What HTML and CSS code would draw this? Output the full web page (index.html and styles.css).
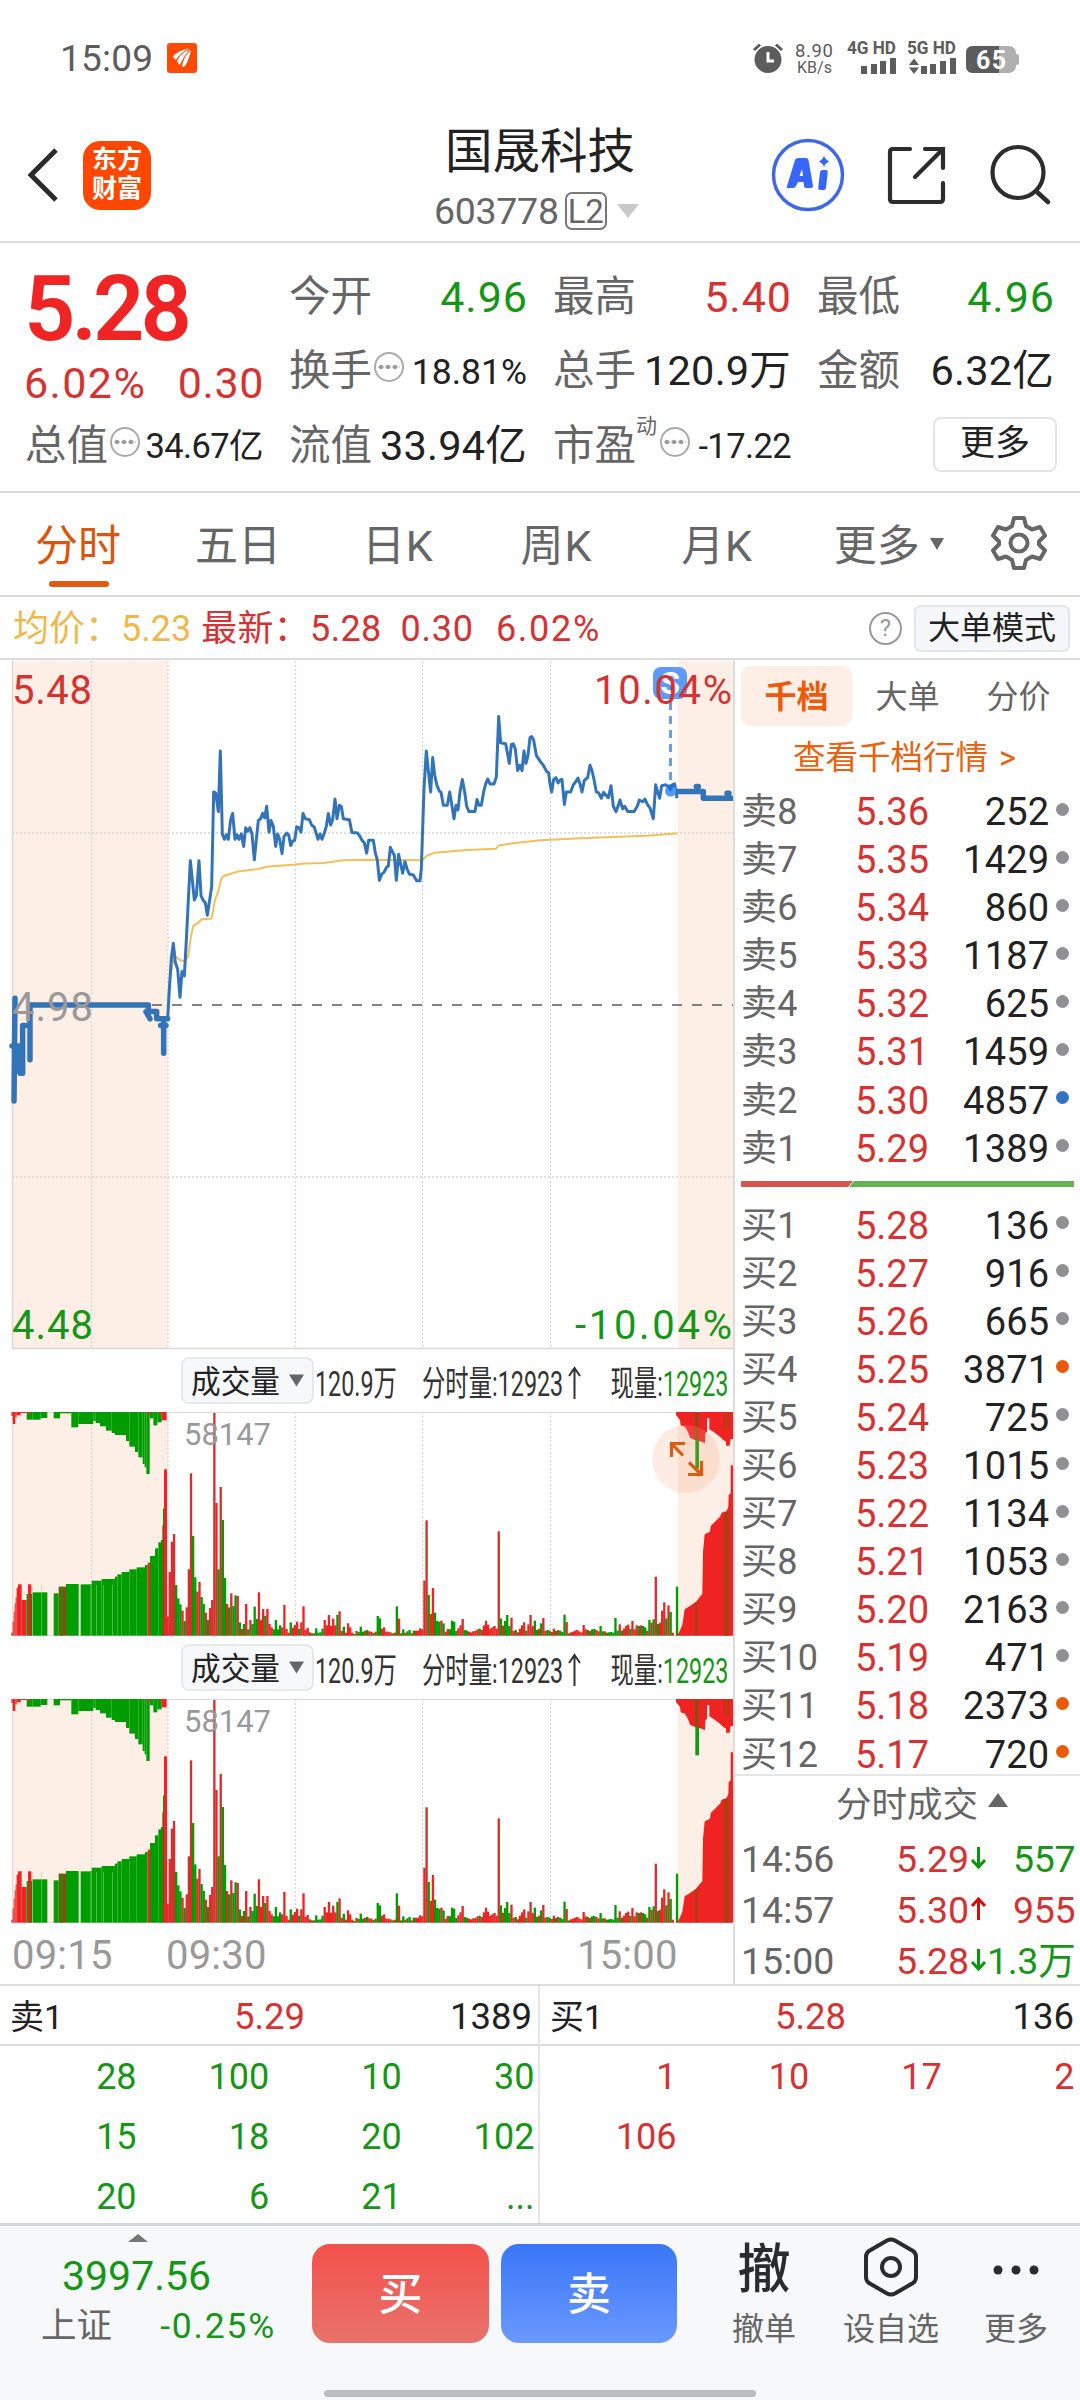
FILE: index.html
```
<!DOCTYPE html>
<html lang="zh-CN">
<head>
<meta charset="utf-8">
<title>国晟科技 603778</title>
<link rel="stylesheet" href="styles.css">
</head>
<body>
<header class="status">
  <span class="clock">15:09</span>
  <svg class="status-app" viewBox="0 0 30 30"><rect width="30" height="30" rx="3" fill="#fe4a05"/><path d="M6 14Q8 9 22 5Q12 11 9 17ZM10 19Q12 11 23 6Q16 14 13 22ZM15 24Q16 14 24 7Q22 17 18 23Z" fill="#fff"/></svg>
  <svg class="status-icons" viewBox="0 0 272 44">
    <g fill="#5c5c5c">
      <circle cx="19" cy="23.500" r="13.500"/>
      <path d="M5 14l6-5.500M27 8.500l6 5.500" stroke="#5c5c5c" stroke-width="3"/>
      <path d="M19 16v9h6" fill="none" stroke="#fff" stroke-width="3"/>
      <text x="46" y="21" font-size="18.500" textLength="38">8.90</text>
      <text x="48" y="37" font-size="16" textLength="35">KB/s</text>
      <text x="98" y="18" font-size="18" font-weight="700" textLength="49" lengthAdjust="spacingAndGlyphs">4G HD</text>
      <text x="158" y="18" font-size="18" font-weight="700" textLength="49" lengthAdjust="spacingAndGlyphs">5G HD</text>
      <path d="M112 30h6v8h-6zM122 28h6v10h-6zM131 25h6v13h-6zM141 22h6v16h-6zM172 30h6v8h-6zM181 28h6v10h-6zM191 25h6v13h-6zM201 22h6v16h-6zM160 29l5-6.500 5 6.500zM160 31.500l5 6.500 5-6.500z"/>
      <rect x="217" y="10" width="50" height="27" rx="7" fill="#b0b0b0"/><rect x="266" y="18" width="4" height="11" rx="2" fill="#b0b0b0"/>
      <path d="M224 10h26v27h-26q-7 0-7-7v-13q0-7 7-7z"/>
      <text x="227" y="32.500" font-size="25" font-weight="700" fill="#fff" textLength="30">65</text>
    </g>
  </svg>
</header>

<nav class="titlebar">
  <svg class="back" viewBox="0 0 32 56"><path d="M29 3L4 28L29 53" fill="none" stroke="#2b2b2b" stroke-width="5"/></svg>
  <div class="logo"><span>东方</span><span>财富</span></div>
  <div class="stock">
    <h1>国晟科技</h1>
    <div class="code"><span>603778</span><b>L2</b><i></i></div>
  </div>
  <svg class="tools" viewBox="0 0 290 80">
    <circle cx="43" cy="40" r="34.500" fill="#fff" stroke="#3f67e8" stroke-width="3.500"/>
    <path d="M30 25Q31 23 33 23H41Q43 23 43.500 25L48 51Q48 53 46 53H41Q39 53 39 51L38.500 47H33L31 51Q30 53 28 53H23Q21 53 22 51ZM37 34L34.500 41H38Z" fill="#3767fa" fill-rule="evenodd"/>
    <path d="M55 37Q55.500 35 57.500 35H61Q63 35 62.700 37L61 53Q60.700 55 58.700 55H55Q53 55 53.200 53Z" fill="#3767fa"/>
    <path d="M59 21q1.500 4 5 5.500q-3.500 1.500-5 5.500q-1.500-4-5-5.500q3.500-1.500 5-5.500z" fill="#3767fa"/>
    <path d="M145 14H128Q125 14 125 17V64Q125 67 128 67H175Q178 67 178 64V48M160 14H178V33M178 14L150 42" fill="none" stroke="#2d2d2d" stroke-width="4.200" stroke-linecap="round"/>
    <circle cx="253" cy="37.500" r="25.500" fill="none" stroke="#2d2d2d" stroke-width="4.200"/><path d="M272 57L283 67" stroke="#2d2d2d" stroke-width="4.500" stroke-linecap="round"/>
  </svg>
</nav>

<section class="quote">
  <div class="col lead">
    <div class="last">5.28</div>
    <div class="chg red"><span>6.02%</span><span>0.30</span></div>
    <div class="cell"><label>总值</label><i class="tip"></i><b class="sm yi">34.67亿</b></div>
  </div>
  <div class="col">
    <div class="cell"><label>今开</label><b class="green px">4.96</b></div>
    <div class="cell"><label>换手</label><i class="tip"></i><b class="sm">18.81%</b></div>
    <div class="cell"><label>流值</label><b>33.94亿</b></div>
  </div>
  <div class="col">
    <div class="cell"><label>最高</label><b class="red px">5.40</b></div>
    <div class="cell"><label>总手</label><b>120.9万</b></div>
    <div class="cell"><label>市盈</label><sup>动</sup><i class="tip"></i><b class="sm yi">-17.22</b></div>
  </div>
  <div class="col">
    <div class="cell"><label>最低</label><b class="green px">4.96</b></div>
    <div class="cell"><label>金额</label><b>6.32亿</b></div>
    <div class="cell end"><button class="more">更多</button></div>
  </div>
</section>

<nav class="tabs">
  <a class="on">分时</a><a>五日</a><a>日K</a><a>周K</a><a>月K</a><a class="drop">更多<i></i></a>
  <svg viewBox="0 0 56 56"><path d="M23 3h10l2 8 6 3.500 8-2.500 5 8.500-6 6v3l6 6-5 8.500-8-2.500-6 3.500-2 8h-10l-2-8-6-3.500-8 2.500-5-8.500 6-6v-3l-6-6 5-8.500 8 2.500 6-3.500z" fill="none" stroke="#666" stroke-width="4" stroke-linejoin="round"/><circle cx="28" cy="28" r="8.500" fill="none" stroke="#666" stroke-width="4"/></svg>
</nav>

<div class="info">
  <span class="avg">均价：5.23</span><span class="red now">最新：5.28</span><span class="red mid">0.30</span><span class="red pct">6.02%</span>
  <i class="help">?</i><button>大单模式</button>
</div>

<main>
  <section class="charts">
    <svg class="price" viewBox="0 660 735 690">
      <path d="M12 661H168V1348H12ZM678 661H733V1348H678Z" fill="#fdeee6"/>
      <path d="M91.500 661V1348M168 661V1348M295.500 661V1348M422.500 661V1348M550.500 661V1348M12 833H733M12 1177H733" class="dots"/>
      <path d="M12.500 660V1348.500H735" fill="none" stroke="#d8d8d8" stroke-width="1.500"/>
      <path d="M152 1005H733" stroke="#808080" stroke-width="1.800" stroke-dasharray="10 10"/>
      <g transform="translate(0 650) scale(.33333 .44643)">
        <polyline class="avgline" points="503,800 510,740 520,690 530,688 540,695 555,697 565,685 573,640 580,618 593,612 605,603 633,602 638,590 645,560 655,540 665,510 675,505 715,496 770,491 805,485 880,481 915,478 970,477 1030,471 1110,470 1267,471 1280,461 1305,454 1400,448 1488,445 1496,438 1540,433 1620,426 1760,421 1940,416 2005,412 2031,411"/>
        <polyline class="line" points="503,826 508,760 514,690 520,657 526,700 533,715 540,778 546,720 553,730 559,650 565,560 571,472 577,515 583,560 589,550 597,472 603,550 609,560 616,566 622,594 629,560 635,530 641,318 647,320 655,362 661,226 667,412 673,424 679,414 685,424 692,380 698,366 705,424 711,414 717,424 724,412 731,440 737,398 743,406 750,398 756,412 763,470 769,425 775,382 782,378 788,366 794,376 800,350 807,408 813,382 820,395 827,440 833,412 839,424 846,456 852,418 860,410 866,414 872,438 878,428 884,426 890,396 897,398 903,408 909,366 916,378 928,380 935,392 943,397 949,412 954,424 960,412 966,424 973,410 979,395 985,366 992,392 998,380 1005,334 1011,378 1018,348 1024,350 1030,378 1048,380 1056,409 1073,410 1080,418 1086,426 1093,432 1100,455 1106,426 1120,426 1126,455 1132,470 1138,516 1145,502 1152,498 1160,486 1165,484 1171,442 1177,452 1183,460 1189,516 1196,458 1202,480 1208,500 1215,474 1221,490 1228,502 1240,504 1250,517 1260,517 1264,490 1272,310 1279,226 1285,270 1292,318 1298,241 1304,280 1311,304 1318,316 1323,318 1330,348 1342,348 1349,318 1355,345 1362,378 1368,348 1374,358 1380,318 1387,290 1394,318 1400,350 1407,362 1425,362 1431,335 1437,348 1444,348 1451,318 1457,300 1463,289 1470,300 1482,300 1489,285 1496,149 1502,208 1517,210 1521,226 1528,254 1534,212 1540,210 1546,222 1553,270 1559,258 1566,270 1572,226 1578,254 1584,236 1590,196 1595,194 1601,202 1609,236 1621,250 1630,258 1640,272 1646,275 1650,300 1655,318 1661,290 1668,286 1674,298 1682,290 1686,290 1693,346 1699,318 1712,318 1720,302 1728,294 1734,287 1740,300 1746,318 1753,292 1763,286 1770,258 1776,270 1782,290 1789,318 1796,320 1804,332 1811,319 1825,331 1833,304 1840,350 1848,362 1855,348 1860,336 1868,356 1874,350 1883,362 1902,362 1912,350 1918,336 1928,340 1935,334 1942,346 1950,354 1960,378 1967,302 1973,318 1979,332 1985,304 1998,302 2005,306 2024,300 2031,332"/>
        <path class="auction" d="M45 780L42 1010M36 887H55V935L60 948H68V841H90V918V795H445V810H470M438 810L450 826M470 812V826H503M482 841H498M491 826V903M2031 317H2110V332H2202M2089 306H2095M2181 321H2187"/>
      </g>
      <rect x="653" y="667" width="34" height="32" rx="8" fill="#5d9bf6"/>
      <text x="670" y="694" font-size="32" font-weight="700" fill="#fff" text-anchor="middle">S</text>
      <path d="M670.500 702V786" stroke="#69a0e4" stroke-width="3" stroke-dasharray="8 6"/>
      <circle cx="670.500" cy="791" r="5.500" fill="#5498f8"/><path d="M666 785h9l-5 7z" fill="#1f6be8"/>
      <g font-size="40">
        <text x="12" y="704" fill="#d93030" textLength="80">5.48</text>
        <text x="12" y="1021" fill="#999" textLength="81">4.98</text>
        <text x="12" y="1339" fill="#169616" textLength="81">4.48</text>
        <text x="594" y="704" fill="#d93030" textLength="138">10.04%</text>
        <text x="575" y="1339" fill="#169616" textLength="157">-10.04%</text>
      </g>
    </svg>
    <div class="volumes"></div>
    <div class="axis"><span>09:15</span><span>09:30</span><span>15:00</span></div>
  </section>

  <aside class="book">
    <div class="booktabs"><b>千档</b><span>大单</span><span>分价</span></div>
    <div class="all">查看千档行情 <span>&gt;</span></div>
    <div class="asks"></div>
    <svg class="ratio" viewBox="0 0 333 6"><path d="M0 0H112L107 6H0Z" fill="#d9534f"/><path d="M113 0H333V6H108Z" fill="#62b54e"/></svg>
    <div class="bids"></div>
    <div class="deals-head">分时成交<i></i></div>
    <div class="deals"></div>
  </aside>
</main>

<section class="queues">
  <div class="queue">
    <header><span>卖1</span><span class="red">5.29</span><span>1389</span></header>
    <div class="nums green"><span>28</span><span>100</span><span>10</span><span>30</span><span>15</span><span>18</span><span>20</span><span>102</span><span>20</span><span>6</span><span>21</span><span>...</span></div>
  </div>
  <div class="queue">
    <header><span>买1</span><span class="red">5.28</span><span>136</span></header>
    <div class="nums red"><span>1</span><span>10</span><span>17</span><span>2</span><span>106</span></div>
  </div>
</section>

<footer>
  <div class="index green"><i></i><strong>3997.56</strong><div><span>上证</span><em>-0.25%</em></div></div>
  <button class="buy">买</button><button class="sell">卖</button>
  <div class="act a1"><b>撤</b><span>撤单</span></div>
  <div class="act a2"><svg viewBox="0 0 56 60"><path d="M24 3.500Q28 1.500 32 3.500L50 14Q53 16 53 20V40Q53 44 50 46L32 56.500Q28 58.500 24 56.500L6 46Q3 44 3 40V20Q3 16 6 14Z" fill="none" stroke="#2b2b2b" stroke-width="4"/><circle cx="28" cy="30" r="9" fill="none" stroke="#2b2b2b" stroke-width="4"/></svg><span>设自选</span></div>
  <div class="act a3"><svg viewBox="0 0 56 60"><g fill="#2b2b2b"><circle cx="10" cy="33" r="4.500"/><circle cx="28" cy="33" r="4.500"/><circle cx="46" cy="33" r="4.500"/></g></svg><span>更多</span></div>
  <div class="home"></div>
</footer>
<script src="app.js"></script>
</body>
</html>
```
FILE: styles.css
```
* { box-sizing: border-box; }
body { margin: 0; width: 1080px; height: 2400px; overflow: hidden; background: #fff; color: #222; font-family: Roboto, "Noto Sans CJK SC", sans-serif; display: flex; flex-direction: column; }
button { font-family: inherit; padding: 0; }
i, em { font-style: normal; }
svg { display: block; flex: none; }
.red { color: #d63232; }
.green { color: #169616; }

.status { height: 112px; display: flex; align-items: flex-start; padding: 36px 59px 0 60px; color: #5c5c5c; }
.clock { font-size: 37px; line-height: 45px; letter-spacing: .2px; }
.status-app { width: 30px; height: 30px; margin: 7px 0 0 14px; }
.status-icons { width: 272px; height: 44px; margin-left: auto; }

.titlebar { height: 131px; border-bottom: 2px solid #dcdcdc; display: flex; position: relative; padding-left: 27px; }
.back { width: 32px; height: 56px; margin-top: 35px; }
.logo { margin: 29px 0 0 24px; width: 68px; height: 69px; border-radius: 17px; background: #ff4702; color: #fff; font-weight: 700; font-size: 25px; line-height: 29px; display: flex; flex-direction: column; align-items: center; padding-top: 4px; }
.stock { flex: 1; padding: 11px 0 0 283px; white-space: nowrap; }
h1 { margin: 0 0 0 11px; font-size: 47.500px; line-height: 58px; font-weight: 400; color: #222; }
.code { display: flex; align-items: center; font-size: 37.500px; line-height: 44px; height: 58px; color: #666; letter-spacing: -.300px; padding-top: 2px; }
.code b { margin-left: 6px; width: 42px; height: 38px; border: 2px solid #777; border-radius: 7px; font-weight: 400; font-size: 33px; line-height: 35px; text-align: center; }
.code i { margin-left: 10px; border: 11px solid transparent; border-top: 14px solid #c9c9c9; border-bottom: 0; }
.tools { width: 290px; height: 80px; margin: 23px 25px 0 0; }

.quote { height: 250px; border-bottom: 2px solid #dcdcdc; padding: 16px 26px 0 25px; display: grid; grid-template-columns: 238px 238px 238px 237px; column-gap: 26px; }
.col { height: 225px; display: flex; flex-direction: column; }
.cell { height: 74.500px; display: flex; align-items: center; white-space: nowrap; }
.cell label { font-size: 41.500px; line-height: 50px; color: #666; padding-top: 1px; }
.cell b { font-weight: 400; font-size: 41.500px; line-height: 50px; margin-left: auto; padding-top: 1px; letter-spacing: .2px; color: #222; }
.cell b.px { font-size: 43px; letter-spacing: 1px; margin-right: -1px; }
.cell b.green { color: #169616; }
.cell b.red { color: #d63232; }
.cell b.sm { font-size: 35.500px; letter-spacing: 0; padding-top: 2px; }
.cell b.yi { font-size: 34.500px; letter-spacing: -.6px; }
.cell sup { font-size: 21px; line-height: 22px; align-self: flex-start; color: #666; margin: 7px -3px 0 0; }
.tip { width: 30px; height: 30px; border: 2px solid #aaa; border-radius: 50%; margin: -7px 0 0 2px; background: radial-gradient(circle, #999 2px, transparent 2.600px) -.500px 0 / 7px 26px repeat-x content-box; padding: 0 2px; }
sup + .tip { margin-left: 6px; }
.last { font-size: 90px; font-weight: 600; line-height: 100px; color: #f02424; height: 95px; letter-spacing: -4px; padding-top: 1px; margin-left: -1px; }
.chg { height: 54px; font-size: 43px; line-height: 58px; display: flex; justify-content: space-between; margin: 0 -1px; }
.chg span:first-child { letter-spacing: 1.400px; }
.chg span { letter-spacing: .6px; }
.end { justify-content: flex-end; }
.more { width: 124px; height: 55px; margin: 0 -3px 2px 0; border: 2px solid #e2e4e6; border-radius: 8px; background: #fff; font-size: 35px; line-height: 48px; color: #222; }

.tabs { height: 104px; border-bottom: 2px solid #dcdcdc; display: flex; align-items: center; padding: 3px 33px 0 35px; font-size: 43px; line-height: 52px; color: #666; }
.tabs a { margin-right: 75px; white-space: nowrap; }
.tabs .on { color: #d9560b; position: relative; margin-right: 74px; }
.on::after { content: ""; position: absolute; left: 14px; top: 61px; width: 60px; height: 6px; border-radius: 3px; background: #e05a10; }
.tabs a:nth-child(2) { margin-right: 81px; }
.tabs a:nth-child(3) { margin-right: 87px; }
.tabs a:nth-child(4) { margin-right: 89px; }
.tabs a:nth-child(5) { margin-right: 81px; }
.tabs a:nth-child(n+3):nth-child(-n+5) { letter-spacing: .8px; }
.tabs .drop { display: flex; align-items: center; margin: 0; }
.drop i { margin: -4px 0 0 10px; border: 7px solid transparent; border-top: 12px solid #666; border-bottom: 0; }
.tabs svg { width: 56px; height: 56px; margin: -5px 0 0 auto; }

.info { height: 63px; border-bottom: 2px solid #dcdcdc; display: flex; align-items: center; padding: 1px 10px 0 13px; font-size: 36px; line-height: 44px; white-space: nowrap; }
.info > span { padding-top: 1px; }
.avg { color: #efb84a; }
.now { margin: 0 19px 0 10px; letter-spacing: .3px; }
.mid { letter-spacing: .8px; }
.pct { margin-left: 22px; letter-spacing: 1.700px; }
.help { margin-left: auto; width: 33px; height: 33px; border: 2.500px solid #999; border-radius: 50%; font-size: 24px; line-height: 29px; text-align: center; color: #999; }
.info button { width: 156px; height: 47px; margin-left: 12px; border: 2px solid #e2e5ea; border-radius: 7px; background: #f6f7fa; font-size: 32px; line-height: 40px; color: #222; }

main { height: 1324px; display: flex; }
.charts { width: 735px; border-right: 2px solid #dcdcdc; flex: none; overflow: hidden; }
.price { width: 735px; height: 690px; }
.dots { stroke: #d6d6d6; stroke-width: 1.300; stroke-dasharray: 2 2; fill: none; }
.line, .avgline, .auction { fill: none; vector-effect: non-scaling-stroke; stroke-linejoin: round; }
.line { stroke: #3374b8; stroke-width: 3; }
.avgline { stroke: #f1c05c; stroke-width: 2; }
.auction { stroke: #3374b8; stroke-width: 5.500; stroke-linecap: round; }
.vhead { width: 735px; height: 62px; font-size: 35px; }
.vol { width: 735px; height: 225px; }
.vgroup { position: relative; }
.expand { position: absolute; left: 652px; top: 75px; width: 68px; height: 68px; }
.axis { display: flex; padding: 9px 0 0 12px; font-size: 40px; line-height: 46px; color: #999; }
.axis span { width: 154px; letter-spacing: .2px; }
.axis span:nth-child(2) { width: 411px; }
.axis span:last-child { width: auto; }

.book { flex: 1; padding: 6px 6px 0 6px; color: #666; }
.booktabs { display: flex; height: 60px; font-size: 32px; line-height: 63px; }
.booktabs b, .booktabs span { width: 111px; text-align: center; flex: none; }
.booktabs b { color: #ee5a0a; font-weight: 700; background: #fdeee6; border-radius: 9px; }
.all { height: 61px; font-size: 32.500px; line-height: 65px; color: #e8620f; padding-left: 52px; white-space: nowrap; }
.all span { margin-left: 3px; }
.lv { height: 48.080px; display: flex; align-items: center; font-size: 36px; line-height: 46px; }
.lv span { width: 100px; white-space: nowrap; padding-top: 2px; letter-spacing: .3px; }
.lv em { width: 88px; text-align: right; color: #d63232; font-size: 38px; padding-top: 2px; }
.lv b { flex: 1; text-align: right; font-weight: 400; color: #222; font-size: 38px; padding-top: 2px; letter-spacing: .2px; }
.lv i { width: 13px; height: 13px; border-radius: 50%; background: #909094; margin: -4px 7px 0 7px; }
.lv i.big { background: #e85a08; }
.lv i.blue { background: #3274c0; }
.ratio { width: 333px; height: 6px; margin: 9px 0 14px; }
.deals-head { height: 59px; margin: -4px -6px 0; border-top: 2px solid #e6e6e6; display: flex; padding-left: 101px; font-size: 35.500px; line-height: 58px; }
.deals-head i { margin: 17px 0 0 10px; height: 0; border: 10px solid transparent; border-bottom: 14px solid #666; border-top: 0; }
.deal { height: 51px; line-height: 52px; font-size: 37.500px; display: flex; white-space: nowrap; }
.deal span { width: 155px; letter-spacing: 0; }
.deal em { color: #d63232; width: 74px; }
.deal svg { width: 17px; height: 27px; margin-top: 11px; }
.deal b { flex: 1; text-align: right; font-weight: 400; letter-spacing: -.3px; margin-right: 1px; }

.queues { height: 239px; border-top: 2px solid #dcdcdc; display: flex; }
.queue { width: 540px; border-right: 2px solid #e6e6e6; }
.queue:last-child { border: 0; }
.queue header { height: 60px; border-bottom: 2px solid #dcdcdc; padding: 0 6px 0 10px; display: grid; grid-template-columns: 177px 1fr 180px; font-size: 36.500px; line-height: 62px; }
.queue header span:nth-child(2) { text-align: center; }
.queue header span:last-child { text-align: right; }
.queue header span:first-child { font-size: 34px; }
.nums { display: grid; grid-template-columns: repeat(4, 132.600px); grid-auto-rows: 60px; font-size: 36px; line-height: 63px; text-align: right; padding-left: 4px; }

footer { flex: 1; background: #f6f8fa; border-top: 3px solid #cfd6da; position: relative; display: flex; }
.index { width: 312px; padding: 8px 38px 0 41px; }
.index i { display: block; width: 0; margin: 0 0 0 87px; border: 10px solid transparent; border-bottom: 8px solid #777; border-top: 0; }
.index strong { display: block; font-weight: 400; font-size: 41px; line-height: 50px; margin: 9px 0 0 21px; }
.index div { display: flex; justify-content: space-between; font-size: 35.500px; line-height: 50px; letter-spacing: 1.800px; margin-right: -2px; }
.index div span { color: #666; letter-spacing: 0; }
.buy, .sell { width: 177px; height: 99px; margin: 18px 12px 0 0; border: 0; border-radius: 18px; color: #fff; font-size: 44px; font-weight: 500; line-height: 96px; padding-top: 3px; }
.buy { background: linear-gradient(#f3514a, #e9726c); }
.sell { width: 176px; background: linear-gradient(#3976f8, #6b99fe); }
.act { display: flex; flex-direction: column; align-items: center; font-size: 32px; line-height: 44px; color: #666; position: relative; white-space: nowrap; }
.act b { font-size: 53px; line-height: 62px; font-weight: 500; color: #2b2b2b; height: 70px; padding-top: 13px; }
.act span { margin-top: 11px; }
.act svg { width: 56px; height: 60px; margin: 11px 0 -1px; }
.a1 { margin-left: 43px; width: 64px; }
.a2 { margin-left: 47px; width: 96px; }
.a3 { margin-left: 45px; width: 64px; }
.home { position: absolute; left: 324px; bottom: 3px; width: 432px; height: 7px; border-radius: 4px; background: #bcbcbe; }
```
FILE: app.js
```
// Minute volume: top edge of each bar on a 3x grid (216 = pane top, 887 = baseline); g = falling minute
const minutes = `830r 696r 605r 582r 735g 775g 793g 812r 843g 802r 688r 400r 588g 712g 755r 726r 771g 792g 818r 840g
804r 780r 219r 489r 688g 441r 540g 714g 792r 802g 760r 798g 766g 768r 847g 867r 852g 792r 868g 840r 852g 800g 837g 757r
840r 807r 828g 807r 852r 862r 868g 840g 868g 856g 862r 795r 867r 878r 847g 863r 855r 845r 866g 847r 799r 869r 864r 877r
880g 880r 865g 878g 877g 866g 840r 856r 825r 857r 836r 856r 825g 814r 873r 860g 878r 850r 862r 878r 882g 873r 876g
860g 875g 872r 870g 874r 875r 879g 875r 828g 835g 866r 862r 875r 875r 877r 880g 878r 799g 836r 880g 868g 878r 874g 870g
880r 872g 872r 872r 865r 868r 722r 541r 765g 822r 744r 818g 843g 845g 842r 850g 875r 867r 868g 842g 845g 873g 865r 856r
837r 870g 872g 875r 877r 874r 873r 868r 866g 870r 856r 842r 854r 866r 862r 858r 866r 574r 835g 857r 843g 825g 858g 833r
873r 870g 877r 866r 856r 847r 872g 853r 825r 858r 842g 870g 866r 850g 834r 872r 870g 872g 876r 866r 873g 870r 872g 876g
824g 846r 880g 877r 875r 872r 870r 874r 877r 855r 868r 870g 873r 868g 867g 870r 874r 858g 874g 874r 878g 877g 876g 878g
834g 872g 853r 872g 866r 858r 854r 867g 843r 868r 856r 858g 856r 858g 862g 872r 840g 848r 838g 710r 852g 848r 812r 787r
835g 796r 816g 878r 887r 740g`.split(/\s+/);

// Opening auction: [x0, x1, edge, colour]
const auctionLow = [[34,38,878,'r'],[38,41,845,'r'],[41,44,815,'r'],[44,47,790,'r'],[47,50,772,'r'],[50,54,743,'r'],[54,65,733,'r'],[65,80,780,'r'],[80,84,762,'g'],[84,94,733,'r'],[88,96,762,'b'],[97,142,757,'g'],[161,176,760,'g'],[176,198,740,'b'],[182,188,740,'g'],[198,236,732,'g'],[242,270,733,'g'],[270,275,733,'g'],[275,305,722,'g'],[305,345,717,'g'],[345,352,710,'g'],[352,365,703,'g'],[365,388,696,'g'],[388,410,688,'g'],[410,435,682,'g'],[435,443,675,'g'],[443,450,668,'r'],[450,465,648,'g'],[465,475,625,'g'],[475,483,607,'g'],[483,489,600,'g'],[489,492,505,'g'],[487,492,556,'b'],[492,501,388,'r']];
const auctionTop = [[34,38,228,'r'],[38,46,252,'r'],[46,50,232,'r'],[50,62,226,'r'],[62,80,219,'r'],[80,97,239,'g'],[84,90,222,'r'],[97,122,239,'g'],[122,142,234,'g'],[161,180,235,'g'],[180,214,220,'g'],[214,235,262,'g'],[235,280,252,'g'],[280,287,243,'g'],[287,300,249,'g'],[300,318,259,'g'],[318,335,272,'g'],[335,345,279,'g'],[345,378,285,'g'],[378,388,303,'g'],[388,405,320,'g'],[405,415,336,'g'],[415,428,352,'g'],[428,434,372,'g'],[434,439,382,'g'],[439,449,402,'g'],[443,450,224,'r'],[450,460,235,'g'],[460,472,256,'g'],[472,485,247,'g'],[485,500,241,'r'],[478,484,222,'r']];
const ink = { r: '#f02323', g: '#009d00', b: '#8c4c10' };
const rect = (x, y, w, h, c) => `<rect x="${x}" y="${y}" width="${w}" height="${h}" fill="${c}"/>`;

function volumeBars() {
  let s = '';
  auctionLow.forEach(([a, b, y, c]) => { s += rect(a, y, b - a, 887 - y, ink[c]); });
  auctionTop.forEach(([a, b, y, c]) => { s += rect(a, 216, b - a, y - 216, ink[c]); });
  [97, 123, 240, 272, 289, 309, 337].forEach(x => { s += rect(x, 735, 1.5, 152, '#9bd79b'); });
  minutes.forEach((m, i) => {
    const y = parseInt(m, 10), tall = y < 720;
    const c = m.endsWith('g') ? ink.g : (tall || i % 3 === 0 ? '#d82e2c' : ink.r);
    s += rect(499.5 + i * 6.367, y, 7, 887 - y, c);
  });
  s += `<g transform="translate(1080 0)">
    <path fill="${ink.r}" d="M951 887L958 875L967 855L974 808L990 798L1008 785L1020 770L1027 762L1029 635L1034 583L1050 575L1052 558L1065 545L1080 530L1085 518L1100 513L1105 500L1106 465L1112 460V376H1121V887ZM948 216V225L960 240L962 256L975 260L985 278L990 293L1005 300L1025 305L1035 310L1036 280L1041 275V235H1048V268L1060 275L1070 283L1080 290L1090 300L1098 305V317H1109L1112 297H1119V216Z"/>
    ${rect(1006, 216, 9, 84, ink.b)}${rect(1006, 300, 11, 85, '#109a10')}${rect(1006, 786, 7, 101, '#a8400f')}${rect(1092, 516, 14, 371, '#a8400f')}${rect(1092, 216, 4, 50, '#a8400f')}${rect(1102, 216, 5, 50, '#a8400f')}
  </g>`;
  return s;
}

function volumePane(expand) {
  return `<div class="vgroup">
  <svg class="vhead" viewBox="0 0 735 62">
    <rect x="182" y="8" width="131" height="45" rx="7" fill="#f7f8fa" stroke="#e0e3e8" stroke-width="1.500"/>
    <text x="191" y="43" font-size="32" fill="#222" textLength="89" lengthAdjust="spacingAndGlyphs">成交量</text>
    <path d="M289 24.500h15l-7.500 12z" fill="#666"/>
    <g fill="#333">
      <text transform="translate(315 45.500) scale(.667 1)">120.9万</text>
      <text transform="translate(422 45.500) scale(.667 1)">分时量:12923</text>
      <text transform="translate(610.500 45.500) scale(.667 1)">现量:<tspan fill="#169616">12923</tspan></text>
    </g>
    <path d="M574.500 49V18M569 26L574.500 18L580 26" fill="none" stroke="#333" stroke-width="2"/>
  </svg>
  <svg class="vol" viewBox="0 0 735 225">
    <path d="M12 0H168V224H12ZM678 0H733V224H678Z" fill="#fdeee6"/>
    <path class="dots" d="M91.500 0V224M168 0V224M295.500 0V224M422.500 0V224M550.500 0V224"/>
    <path d="M12.500 0V224M12 .500H735M12 223.500H735" fill="none" stroke="#dcdcdc" stroke-width="1.200"/>
    <g transform="scale(.33333) translate(0 -216)">${volumeBars()}</g>
    <text x="184" y="33" font-size="31" fill="#999" textLength="87">58147</text>
  </svg>
  ${expand ? `<svg class="expand" viewBox="0 0 68 68"><circle cx="34" cy="34" r="34" fill="#f9a77b" fill-opacity=".22"/><path d="M19.500 32V18.500H33M19.500 18.500L31 30.500M49.500 36V49.500H36M49.500 49.500L37 37.500" fill="none" stroke="#dc5a12" stroke-width="3.200"/></svg>` : ''}
  </div>`;
}
document.querySelector('.volumes').innerHTML = volumePane(true) + volumePane(false);

const level = ([name, price, qty, mark]) => `<div class="lv"><span>${name}</span><em>${price}</em><b>${qty}</b><i class="${mark || ''}"></i></div>`;
document.querySelector('.asks').innerHTML = [['卖8','5.36',252],['卖7','5.35',1429],['卖6','5.34',860],['卖5','5.33',1187],['卖4','5.32',625],['卖3','5.31',1459],['卖2','5.30',4857,'blue'],['卖1','5.29',1389]].map(level).join('');
document.querySelector('.bids').innerHTML = [['买1','5.28',136],['买2','5.27',916],['买3','5.26',665],['买4','5.25',3871,'big'],['买5','5.24',725],['买6','5.23',1015],['买7','5.22',1134],['买8','5.21',1053],['买9','5.20',2163],['买10','5.19',471],['买11','5.18',2373,'big'],['买12','5.17',720,'big']].map(level).join('');

const deal = ([time, price, up, qty, cls]) => `<div class="deal"><span>${time}</span><em>${price}</em><svg viewBox="0 0 17 27"><path d="${up ? 'M8.500 25V4M2 11L8.500 4L15 11' : 'M8.500 3V23M2 16L8.500 23L15 16'}" fill="none" stroke="${up ? '#d60c0c' : '#0a960a'}" stroke-width="3"/></svg><b class="${cls}">${qty}</b></div>`;
document.querySelector('.deals').innerHTML = [['14:56','5.29',0,'557','green'],['14:57','5.30',1,'955','red'],['15:00','5.28',0,'1.3万','green']].map(deal).join('');
```
